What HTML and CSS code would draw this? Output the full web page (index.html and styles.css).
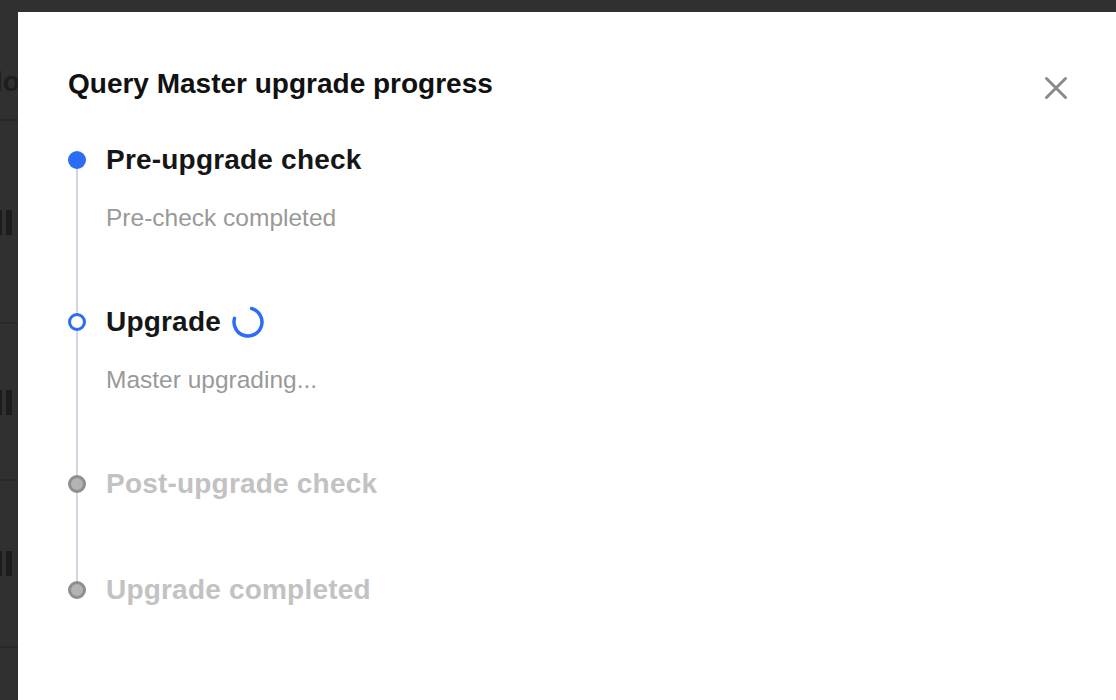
FILE: index.html
```html
<!DOCTYPE html>
<html>
<head>
<meta charset="utf-8">
<link rel="stylesheet" href="styles.css">
</head>
<body>
<div class="page">
  <div class="bg-head"><span class="bg-title">lo</span></div>
  <div class="bg-row r1"><span class="bg-bars"><i></i><i></i></span></div>
  <div class="bg-row r2"><span class="bg-bars"><i></i><i></i></span></div>
  <div class="bg-row r3"><span class="bg-bars"><i></i><i></i></span></div>
</div>
<div class="modal">
  <div class="modal-header">
    <h2 class="modal-title">Query Master upgrade progress</h2>
    <button class="close" aria-label="Close">
      <svg width="24" height="24" viewBox="0 0 24 24"><path d="M2.5 2.5 L21.5 21.5 M21.5 2.5 L2.5 21.5" stroke="#8a8a8a" stroke-width="3" stroke-linecap="round"/></svg>
    </button>
  </div>
  <ol class="steps">
    <li class="step done">
      <div class="dot"></div>
      <div class="step-body">
        <div class="step-title">Pre-upgrade check</div>
        <div class="step-desc">Pre-check completed</div>
      </div>
    </li>
    <li class="step active">
      <div class="dot"></div>
      <div class="step-body">
        <div class="step-title">Upgrade
          <svg class="spinner" width="34" height="34" viewBox="0 0 34 34"><path d="M17 3 A14 14 0 1 1 3 17" fill="none" stroke="#2d6df6" stroke-width="3.5" stroke-linecap="round" transform="rotate(15 17 17)"/></svg>
        </div>
        <div class="step-desc">Master upgrading...</div>
      </div>
    </li>
    <li class="step wait">
      <div class="dot"></div>
      <div class="step-body">
        <div class="step-title">Post-upgrade check</div>
      </div>
    </li>
    <li class="step wait last">
      <div class="dot"></div>
      <div class="step-body">
        <div class="step-title">Upgrade completed</div>
      </div>
    </li>
  </ol>
</div>
</body>
</html>
```
FILE: styles.css
```css
* { box-sizing: border-box; }
html, body { margin: 0; padding: 0; }
body {
  width: 1116px;
  height: 700px;
  overflow: hidden;
  background: #303030;
  font-family: "Liberation Sans", Arial, sans-serif;
  position: relative;
}
.page { width: 1116px; }
.bg-head {
  height: 121px;
  border-bottom: 2px solid #272727;
  padding-top: 66px;
}
.bg-title {
  display: inline-block;
  margin-left: -5px;
  font-size: 28px;
  font-weight: bold;
  color: #1e1e1e;
}
.bg-row {
  border-bottom: 2px solid #292929;
}
.bg-row.r1 { height: 203px; padding-top: 89px; }
.bg-row.r2 { height: 157px; padding-top: 66px; }
.bg-row.r3 { height: 167px; padding-top: 70px; }
.bg-bars { display: flex; gap: 4px; }
.bg-bars i { display: block; width: 2px; height: 25px; background: #1c1c1c; }
.bg-bars i + i { width: 6px; }

.modal {
  position: absolute;
  left: 18px;
  top: 12px;
  right: 0;
  bottom: 0;
  background: #fff;
  padding: 56px 0 0 50px;
}
.modal-header {
  display: flex;
  align-items: center;
  justify-content: space-between;
  padding-right: 48px;
  height: 32px;
}
.modal-title {
  margin: 0;
  font-size: 28px;
  line-height: 32px;
  font-weight: bold;
  color: #111;
}
.close {
  border: 0;
  background: none;
  padding: 0;
  width: 24px;
  height: 24px;
  margin-top: 8px;
}
.close svg { display: block; }
.steps {
  list-style: none;
  margin: 45px 0 0;
  padding: 0;
}
.step {
  display: flex;
  position: relative;
  padding-bottom: 76px;
}
.step::before {
  content: "";
  position: absolute;
  left: 8px;
  top: 16px;
  bottom: -16px;
  width: 2px;
  background: #d3d6de;
}
.step.last::before { display: none; }
.dot {
  position: relative;
  z-index: 1;
  width: 18px;
  height: 18px;
  border-radius: 50%;
  margin-top: 6px;
  flex: none;
}
.done .dot { background: #2d6df6; }
.active .dot { background: #fff; border: 3.5px solid #2d6df6; }
.wait .dot { background: #b3b3b3; border: 3.5px solid #8e8e8e; }
.step-body { margin-left: 20px; }
.step-title {
  font-size: 28px;
  font-weight: bold;
  line-height: 30px;
  height: 30px;
  letter-spacing: 0.2px;
  color: #161616;
  display: flex;
  align-items: center;
  gap: 10px;
}
.wait .step-title { color: #c2c2c2; }
.spinner { display: block; flex: none; margin: -2px 0; }
.step-desc {
  margin-top: 30px;
  font-size: 24.5px;
  line-height: 26px;
  height: 26px;
  color: #999;
}
```
